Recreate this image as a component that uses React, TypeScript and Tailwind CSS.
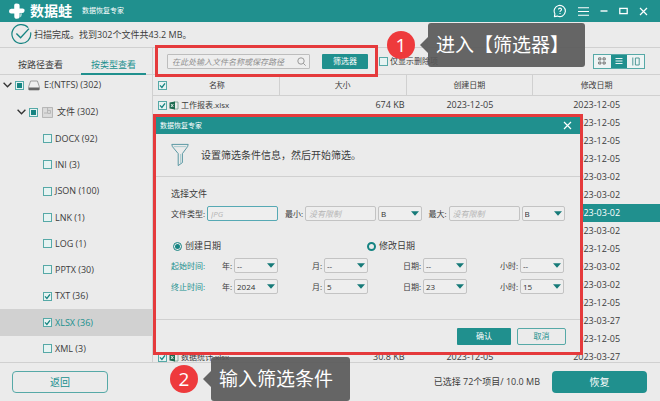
import React, { FC, ReactNode } from "react";

interface CheckProps {
  label: string;
  state?: "on" | "off" | "partial";
}

const Check: FC<CheckProps> = ({ label, state = "off" }) => {
  return (
    <span className="relative flex shrink-0">
      <input
        type="checkbox"
        aria-label={label}
        defaultChecked={state === "on"}
        className="peer size-[9px] appearance-none border border-[#56a9a7] bg-[#e6f3f2]"
      />
      {state === "partial" && (
        <span className="pointer-events-none absolute inset-[2px] bg-[#168482]" />
      )}
      <svg
        viewBox="0 0 9 9"
        className="pointer-events-none absolute inset-0 hidden size-[9px] peer-checked:block"
        fill="none"
        stroke="#168482"
        strokeWidth="1.3"
      >
        <path d="M2 4.4 L3.9 6.4 L7 2.4" />
      </svg>
    </span>
  );
};

interface DropDownProps {
  label: string;
  value: string;
}

const DropDown: FC<DropDownProps> = ({ label, value }) => {
  return (
    <span className="relative flex w-[44px]">
      <select
        aria-label={label}
        className="h-[15px] w-full appearance-none rounded-[2px] border border-[#c3c3c3] bg-[#eeeeee] pl-0.5 text-[8px] leading-[12px] text-[#333]"
      >
        <option>{value}</option>
      </select>
      <svg
        viewBox="0 0 8 5"
        className="pointer-events-none absolute top-[5px] right-[3px] h-[5px] w-[8px]"
      >
        <path d="M0 0.3 H8 L4 4.8 Z" fill="#167a78" />
      </svg>
    </span>
  );
};

const Chevron: FC = () => {
  return (
    <svg viewBox="0 0 9 6" className="h-[6px] w-[9px] shrink-0" fill="none" stroke="#333" strokeWidth="1.3">
      <path d="M0.6 0.8 L4.5 4.8 L8.4 0.8" />
    </svg>
  );
};

const CloseIcon: FC = () => {
  return (
    <svg viewBox="0 0 9 9" className="size-[9px]" fill="none" stroke="white" strokeWidth="1.2">
      <path d="M1 1 L8 8 M8 1 L1 8" />
    </svg>
  );
};

const TitleBar: FC = () => {
  return (
    <header className="flex h-[22px] shrink-0 items-center bg-[#20908e] pr-3 pl-2 text-white">
      <svg viewBox="0 0 18 18" className="size-[18px]">
        <path
          d="M6.2 3.2 Q6.2 1.4 8.2 1.5 L10.2 1.8 Q11.6 2 11.6 3.6 V6.4 H14.6 Q16.6 6.4 16.6 8 Q16.6 10.8 14.2 11 H11.6 V14.6 Q11.6 16.8 9 16.8 Q6.3 16.8 6.3 14.4 V11.6 H3.2 Q1 11.6 1 9.2 Q1 6.7 3.2 6.7 H6.2 Z"
          fill="white"
        />
        <path d="M12.6 10.8 H13.4 Q14.6 12.6 13.2 14.6 L11.4 15.8 Z" fill="#a8d6d4" />
      </svg>
      <h1 className="ml-1 text-[14px] leading-[22px] font-bold">数据蛙</h1>
      <span className="mt-px ml-2.5 text-[7px]">数据恢复专家</span>
      <div className="ml-auto flex items-center gap-[11px]">
        <button type="button" aria-label="帮助">
          <svg viewBox="0 0 14 14" className="size-[14px]" fill="none" stroke="white" strokeWidth="1.1">
            <path d="M1.4 12.6 L1.9 9.8 A5.6 5.6 0 1 1 4.4 12.1 Z" strokeLinejoin="round" />
            <path d="M5.5 5.6 Q5.5 4.1 7 4.1 Q8.5 4.1 8.5 5.5 Q8.5 6.3 7.6 6.8 Q7 7.1 7 8 M7 9 V10" />
          </svg>
        </button>
        <button type="button" aria-label="菜单">
          <svg viewBox="0 0 11 9" className="h-[9px] w-[11px]" stroke="white" strokeWidth="1.1">
            <path d="M0 0.8 H11 M0 4.5 H11 M0 8.2 H11" />
          </svg>
        </button>
        <button type="button" aria-label="最小化">
          <svg viewBox="0 0 8 8" className="size-[8px]" stroke="white" strokeWidth="1.4">
            <path d="M0.5 4 H7.5" />
          </svg>
        </button>
        <button type="button" aria-label="最大化">
          <svg viewBox="0 0 9 8" className="h-[8px] w-[9px]" fill="none" stroke="white" strokeWidth="1.3">
            <rect x="0.8" y="1.4" width="7.4" height="5.2" />
          </svg>
        </button>
        <button type="button" aria-label="关闭">
          <CloseIcon />
        </button>
      </div>
    </header>
  );
};

const fileTypes = [
  { name: "DOCX (92)", checked: false },
  { name: "INI (3)", checked: false },
  { name: "JSON (100)", checked: false },
  { name: "LNK (1)", checked: false },
  { name: "LOG (1)", checked: false },
  { name: "PPTX (30)", checked: false },
  { name: "TXT (36)", checked: true },
  { name: "XLSX (36)", checked: true, selected: true },
  { name: "XML (3)", checked: false },
];

const Sidebar: FC = () => {
  return (
    <aside className="flex w-[153px] shrink-0 flex-col border-r border-[#d0d0d0]">
      <div className="flex h-[27px] shrink-0 border-b border-[#d0d0d0] pr-1.5 text-[9px]">
        <button type="button" className="w-[81px] pt-2">
          按路径查看
        </button>
        <button type="button" className="-mb-px flex-1 border-b-2 border-[#20908e] pt-2 text-[#20908e]">
          按类型查看
        </button>
      </div>
      <ul className="flex min-h-0 flex-1 flex-col text-[9px]">
        <li className="flex h-[24px] shrink-0 items-center gap-[3px] pb-1 pl-[3px]">
          <Chevron />
          <Check label="E:(NTFS)" state="partial" />
          <svg viewBox="0 0 12 11" className="ml-px h-[11px] w-[12px]">
            <path d="M2.6 1 H9.4 L11.3 6.6 V9.4 Q11.3 10 10.6 10 H1.4 Q0.7 10 0.7 9.4 V6.6 Z" fill="#efefef" stroke="#8b8b8b" strokeWidth="0.8" />
            <path d="M0.7 7.4 H11.3 V9.4 Q11.3 10 10.6 10 H1.4 Q0.7 10 0.7 9.4 Z" fill="#666" />
          </svg>
          <span className="ml-px">E:(NTFS) (302)</span>
        </li>
        <li className="flex flex-1 items-center gap-[3px] pl-[17px]">
          <Chevron />
          <Check label="文件" state="partial" />
          <svg viewBox="0 0 11 11" className="ml-px size-[11px]" fill="none" stroke="#b0b0b0" strokeWidth="0.9">
            <rect x="0.6" y="0.6" width="9.8" height="9.8" fill="#dcdcdc" />
            <path d="M5.6 0.6 V6 H2 M5.6 3.4 H8.4 V6.4 H5.6" />
          </svg>
          <span className="ml-px">文件 (302)</span>
        </li>
        {fileTypes.map((type) => (
          <li
            key={type.name}
            className={
              type.selected
                ? "flex flex-1 items-center gap-[3px] bg-[#d1d1d1] pl-[43px] text-[#20908e]"
                : "flex flex-1 items-center gap-[3px] pl-[43px]"
            }
          >
            <Check label={type.name} state={type.checked ? "on" : "off"} />
            <span>{type.name}</span>
          </li>
        ))}
      </ul>
    </aside>
  );
};

const Toolbar: FC = () => {
  return (
    <div className="flex h-[27px] shrink-0 items-center border-b border-[#d0d0d0] pr-[15px] pl-[14px]">
      <div className="relative flex gap-3">
        <label className="relative flex">
          <input
            type="text"
            aria-label="搜索"
            placeholder="在此处输入文件名称或保存路径"
            className="h-[15px] w-[143px] rounded-[1px] border border-[#bdbdbd] bg-[#eeeeee] px-1 text-[8px] italic placeholder:text-[#8f8f8f]"
          />
          <svg viewBox="0 0 9 9" className="absolute top-[3px] right-1 size-[9px]" fill="none" stroke="#999">
            <circle cx="4" cy="4" r="3.2" />
            <path d="M6.3 6.3 L8.6 8.6" />
          </svg>
        </label>
        <button type="button" className="h-[15px] w-[46px] rounded-[1px] bg-[#20908e] text-[8px] text-white">
          筛选器
        </button>
        <div className="pointer-events-none absolute -top-[9px] -right-[10px] -bottom-[8px] -left-[12px] z-10 border-[3px] border-[#e53a3c]" />
      </div>
      <label className="ml-[11px] flex items-center gap-0.5 text-[8px]">
        <Check label="仅显示删除项" />
        <span>仅显示删除项</span>
      </label>
      <div className="ml-auto flex h-[15px] w-[52px] border border-[#56a9a7] bg-[#eef4f4]">
        <button type="button" aria-label="网格" className="flex flex-1 items-center justify-center">
          <svg viewBox="0 0 8 8" className="size-[8px]" fill="none" stroke="#666" strokeWidth="0.9">
            <path d="M0.7 0.9 H2.9 V2.9 H0.7 Z M5 0.9 H7.2 V2.9 H5 Z M0.7 5 H2.9 V7 H0.7 Z M5 5 H7.2 V7 H5 Z" />
          </svg>
        </button>
        <button type="button" aria-label="列表" className="flex flex-1 items-center justify-center bg-[#20908e]">
          <svg viewBox="0 0 8 8" className="size-[8px]" stroke="white" strokeWidth="0.9">
            <path d="M0.5 1.5 H7.5 M0.5 4 H7.5 M0.5 6.5 H7.5" />
          </svg>
        </button>
        <button type="button" aria-label="预览" className="flex flex-1 items-center justify-center">
          <svg viewBox="0 0 8 9" className="h-[9px] w-[8px]" fill="none" stroke="#3f8f8d" strokeWidth="0.9">
            <path d="M0.8 0.5 V8.5 M3.4 1 H7.2 V8 H3.4 Z" />
          </svg>
        </button>
      </div>
    </div>
  );
};

interface FileRow {
  name?: string;
  size?: string;
  created?: string;
  modified: string;
  selected?: boolean;
}

const files: FileRow[] = [
  { name: "工作报表.xlsx", size: "674 KB", created: "2023-12-05", modified: "2023-12-05" },
  { modified: "2023-12-05" },
  { modified: "2023-12-05" },
  { modified: "2023-12-05" },
  { modified: "2023-03-02" },
  { modified: "2023-03-02" },
  { modified: "2023-03-02", selected: true },
  { modified: "2023-03-02" },
  { modified: "2023-12-05" },
  { modified: "2023-03-02" },
  { modified: "2023-03-02" },
  { modified: "2023-12-05" },
  { modified: "2023-03-27" },
  { modified: "2023-12-05" },
  { name: "数据统计.xlsx", size: "30.8 KB", created: "2023-12-05", modified: "2023-03-27" },
];

const FileTable: FC = () => {
  return (
    <table className="w-full table-fixed border-separate border-spacing-0 text-[9px] leading-[12px]">
      <thead>
        <tr className="h-[21px] text-[8px]">
          <th className="border-r border-b border-[#d0d0d0] p-0 font-normal">
            <div className="flex items-center pl-[5px]">
              <Check label="全选" state="on" />
              <span className="flex-1 pr-3 text-center">名称</span>
            </div>
          </th>
          <th className="border-r border-b border-[#d0d0d0] p-0 font-normal">大小</th>
          <th className="border-r border-b border-[#d0d0d0] p-0 font-normal">创建日期</th>
          <th className="border-b border-[#d0d0d0] p-0 font-normal">修改日期</th>
        </tr>
      </thead>
      <tbody>
        {files.map((file, i) => (
          <tr key={i} className={file.selected ? "h-[18px] bg-[#20908e] text-white" : "h-[18px]"}>
            <td className="p-0">
              {file.name && (
                <div className="flex items-center gap-0.5 pl-[5px]">
                  <Check label={file.name} state="on" />
                  <svg viewBox="0 0 10 9" className="h-[9px] w-[10px]">
                    <path d="M5 1 H9 V8 H5" fill="none" stroke="#6f9f8e" strokeWidth="0.8" />
                    <path d="M0.5 1.5 L6 0.4 V8.6 L0.5 7.5 Z" fill="#1d6b50" />
                    <path d="M2 3 L4.4 6 M4.4 3 L2 6" stroke="white" strokeWidth="0.8" />
                  </svg>
                  <span className="text-[8px]">{file.name}</span>
                </div>
              )}
            </td>
            <td className="p-0 pr-0.5 text-right">{file.size}</td>
            <td className="p-0 text-center">{file.created}</td>
            <td className="p-0 text-center">{file.modified}</td>
          </tr>
        ))}
      </tbody>
    </table>
  );
};

const dateRows = [
  { title: "起始时间:", values: ["--", "--", "--", "--"] },
  { title: "终止时间:", values: ["2024", "5", "23", "15"] },
];

const units = ["年:", "月:", "日期:", "小时:"];

const FilterDialog: FC = () => {
  return (
    <section
      role="dialog"
      aria-label="数据恢复专家"
      className="absolute top-[114px] left-[153px] w-[430px] border-[3px] border-[#e53a3c] bg-[#ebebeb] text-[8px] leading-[12px] whitespace-nowrap"
    >
      <div className="flex h-[17px] items-center justify-between bg-[#20908e] pr-2 pl-1 text-[7px] text-white">
        <span>数据恢复专家</span>
        <button type="button" aria-label="关闭">
          <CloseIcon />
        </button>
      </div>
      <div className="flex h-[43px] items-center gap-3 border-b border-[#d0d0d0] px-[15px]">
        <svg viewBox="0 0 18 24" className="h-[24px] w-[18px]" fill="none" stroke="#4b8f9b" strokeWidth="0.9" strokeLinejoin="round">
          <path d="M0.8 1.4 H17.2 L16.6 3.6 L11.4 10.6 V19.6 L7.2 22.6 V10.6 L1.4 3.6 Z" />
          <path d="M2.6 3.6 H15.4 M9.6 11 V20.4" stroke="#8cbcc0" strokeWidth="0.7" />
        </svg>
        <h2 className="text-[10px]">设置筛选条件信息，然后开始筛选。</h2>
      </div>
      <div className="flex h-[143px] flex-col border-b border-[#d0d0d0] px-[15px] pt-[11px]">
        <h3 className="text-[9px]">选择文件</h3>
        <div className="mt-[6px] flex items-center gap-0.5">
          <label className="flex items-center gap-0.5">
            <span className="w-[34px]">文件类型:</span>
            <input
              type="text"
              placeholder="JPG"
              className="h-[15px] w-[71px] rounded-[2px] border border-[#56a9b4] bg-[#eeeeee] px-[3px] italic placeholder:text-[#b5b5b5]"
            />
          </label>
          <label className="ml-[5px] flex items-center gap-0.5">
            <span className="w-[18px]">最小:</span>
            <input
              type="text"
              placeholder="没有限制"
              className="h-[15px] w-[71px] rounded-[2px] border border-[#c3c3c3] bg-[#eeeeee] px-[3px] italic placeholder:text-[#b5b5b5]"
            />
          </label>
          <DropDown label="最小单位" value="B" />
          <label className="ml-[5px] flex items-center gap-0.5">
            <span className="w-[18px]">最大:</span>
            <input
              type="text"
              placeholder="没有限制"
              className="h-[15px] w-[71px] rounded-[2px] border border-[#c3c3c3] bg-[#eeeeee] px-[3px] italic placeholder:text-[#b5b5b5]"
            />
          </label>
          <DropDown label="最大单位" value="B" />
        </div>
        <div className="mt-[19px] flex text-[9px]">
          <label className="flex w-[196px] items-center gap-[3px] pl-0.5">
            <input
              type="radio"
              name="date"
              defaultChecked
              className="size-[9px] appearance-none rounded-full border border-[#168482] bg-[#168482] bg-clip-content p-px"
            />
            创建日期
          </label>
          <label className="flex items-center gap-[3px]">
            <input
              type="radio"
              name="date"
              className="size-[9px] appearance-none rounded-full border-2 border-[#168482]"
            />
            修改日期
          </label>
        </div>
        <div className="mt-[6px] flex flex-col gap-[6px]">
          {dateRows.map((row) => (
            <div key={row.title} className="grid grid-cols-[34px_73px_90px_99px_97px] items-center">
              <span className="text-[#20908e]">{row.title}</span>
              {row.values.map((value, i) => (
                <div key={units[i]} className="flex items-center justify-end gap-0.5">
                  <span>{units[i]}</span>
                  <DropDown label={row.title + units[i]} value={value} />
                </div>
              ))}
            </div>
          ))}
        </div>
      </div>
      <div className="flex h-[32px] items-center justify-end gap-1.5 pr-[14px]">
        <button type="button" className="h-[17px] w-[54px] rounded-[1px] bg-[#20908e] text-white">
          确认
        </button>
        <button type="button" className="h-[17px] w-[49px] rounded-[2px] border border-[#56a9a7] text-[#20908e]">
          取消
        </button>
      </div>
    </section>
  );
};

interface CalloutProps {
  step: string;
  place: string;
  children: ReactNode;
}

const Callout: FC<CalloutProps> = ({ step, place, children }) => {
  return (
    <div className={`absolute z-20 flex items-center ${place}`}>
      <span className="flex size-[28px] items-center justify-center rounded-full bg-[#ee3a3c] text-[19px] leading-[28px] text-white">
        {step}
      </span>
      <svg viewBox="0 0 8 16" className="ml-[5px] h-[16px] w-[8px]">
        <path d="M8 0 V16 L0 8 Z" fill="#646464" />
      </svg>
      <span className="flex h-[44px] flex-1 items-center rounded-[3px] bg-[#565656]/90 pl-2 text-[19px] leading-[28px] text-white">
        {children}
      </span>
    </div>
  );
};

const App: FC = () => {
  return (
    <div className="relative flex h-screen flex-col overflow-hidden bg-[#ebebeb] font-['Open_Sans','Noto_Sans_CJK_SC',sans-serif] text-[#3c3c3c]">
      <TitleBar />
      <div className="flex h-[26px] shrink-0 items-center gap-0.5 border-b border-[#d0d0d0] pl-[11px] text-[9px]">
        <svg viewBox="0 0 21 21" className="size-[21px]" fill="none" stroke="#168482" strokeWidth="1.2">
          <path d="M17.2 3.6 A9.4 9.4 0 1 0 19.6 8.4" />
          <path d="M5.4 9.6 L9.6 13.8 L18 4.6" strokeWidth="1.4" />
        </svg>
        <p>扫描完成。找到302个文件共43.2 MB。</p>
      </div>
      <main className="flex min-h-0 flex-1">
        <Sidebar />
        <div className="flex min-w-0 flex-1 flex-col">
          <Toolbar />
          <div className="min-h-0 flex-1 overflow-hidden">
            <FileTable />
          </div>
        </div>
      </main>
      <footer className="flex h-[39px] shrink-0 items-center border-t border-[#d0d0d0] bg-[#ebebeb] pr-[13px] pl-3 text-[9px]">
        <button type="button" className="h-[22px] w-[96px] rounded-[4px] border border-[#56a9a7] text-[10px] text-[#20908e]">
          返回
        </button>
        <span className="ml-auto">已选择 72个项目/ 10.0 MB</span>
        <button type="button" className="ml-3 h-[22px] w-[95px] rounded-[4px] bg-[#20908e] text-[10px] text-white">
          恢复
        </button>
      </footer>
      <FilterDialog />
      <Callout step="1" place="top-[23px] left-[387px] w-[198px]">
        进入【筛选器】
      </Callout>
      <Callout step="2" place="top-[357px] left-[170px] w-[180px]">
        输入筛选条件
      </Callout>
    </div>
  );
};

export default App;
